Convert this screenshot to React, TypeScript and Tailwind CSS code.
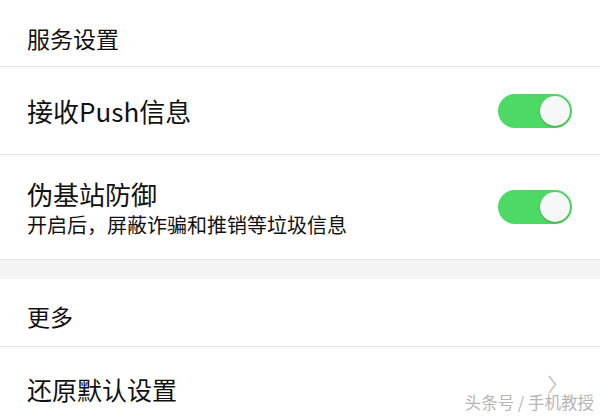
const FONT = "font-['Noto_Sans_CJK_SC','Noto_Sans',sans-serif]"

function Toggle() {
  return (
    <div className="flex h-[34px] w-[74px] items-center justify-end rounded-full bg-[#4cd964] p-[2px]">
      <div className="h-[30px] w-[30px] rounded-full bg-[#f7f7f7] shadow-[0_1px_2px_rgba(0,0,0,0.25)]" />
    </div>
  )
}

export default function App() {
  return (
    <div className={`relative h-[417px] w-[600px] overflow-hidden bg-white text-[#111] ${FONT}`}>
      {/* 服务设置 */}
      <div className="flex h-[67px] items-center border-b border-[#e3e3e3] pl-[27px] pt-[10px] text-[23px]">
        服务设置
      </div>

      <div className="flex h-[88px] items-center justify-between border-b border-[#e3e3e3] pl-[27px] pr-[28px]">
        <span className="text-[26px]">接收Push信息</span>
        <Toggle />
      </div>

      <div className="flex h-[104px] items-center justify-between pl-[27px] pr-[28px]">
        <div className="flex flex-col pt-[2px]">
          <span className="text-[26px] leading-[34px]">伪基站防御</span>
          <span className="text-[20px] leading-[28px]">开启后，屏蔽诈骗和推销等垃圾信息</span>
        </div>
        <Toggle />
      </div>

      <div className="h-[20px] border-t border-[#e3e3e3] bg-[#f4f4f4]" />

      {/* 更多 */}
      <div className="flex h-[68px] items-center border-b border-[#e3e3e3] pl-[27px] pt-[8px] text-[23px]">
        更多
      </div>

      <div className="flex h-[70px] items-center justify-between pl-[27px] pr-[43px] pt-[16px]">
        <span className="text-[25px]">还原默认设置</span>
        <svg className="-mt-[12px]" width="9" height="19" viewBox="0 0 9 19" fill="none" stroke="#c4c4c4" strokeWidth="1.6">
          <path d="M1 1 L7.5 9.5 L1 18" />
        </svg>
      </div>

      <div className="absolute bottom-[2px] right-[6px] text-[16.5px] text-[#b5b5b5] [text-shadow:0_0_2px_#fff]">
        头条号 / 手机教授
      </div>
    </div>
  )
}
